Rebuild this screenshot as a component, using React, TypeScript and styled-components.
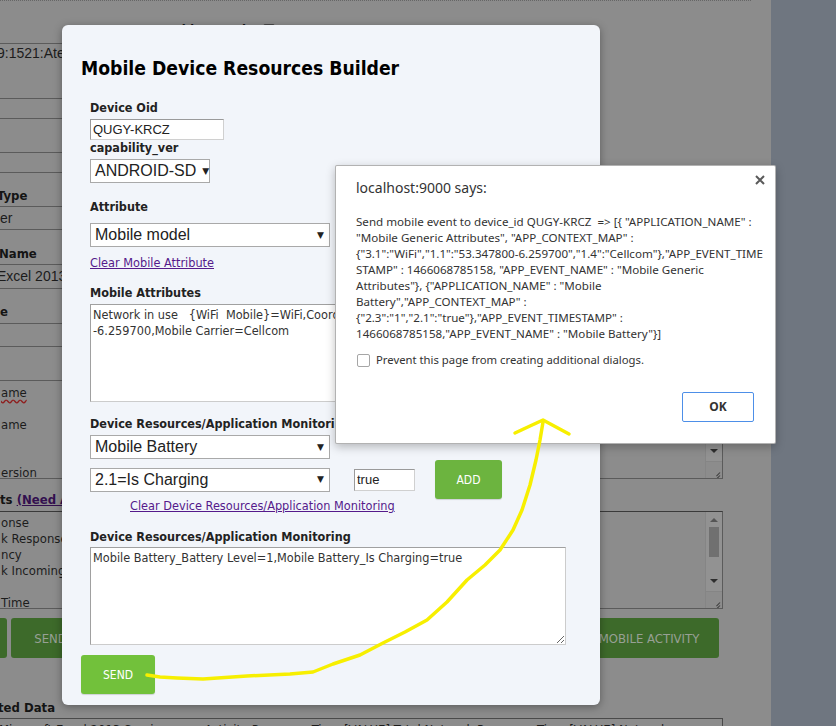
import React from "react";
import styled, { createGlobalStyle } from "styled-components";

const tahoma = `"DejaVu Sans Condensed", "Liberation Sans", sans-serif`;
const arial = `"Liberation Sans", Arial, sans-serif`;
const segoe = `"Noto Sans", "Open Sans", sans-serif`;

const Global = createGlobalStyle`
  html, body { margin: 0; padding: 0; overflow: hidden; }
  body { width: 836px; height: 726px; background: #6f7680; }
`;

const Screen = styled.div`
  position: relative;
  width: 836px;
  height: 726px;
  overflow: hidden;
`;

/* ---------- dimmed page behind the modal ---------- */
const Backdrop = styled.div`
  display: flex;
  width: 836px;
  height: 726px;
  background: #6f7680;
`;

const BgPage = styled.div`
  flex: none;
  width: 771px;
  height: 726px;
  background: #8c8c8c;
  overflow: hidden;
  display: flex;
  flex-direction: column;
  color: #1c1c1c;
  font-family: ${tahoma};
`;

const TopRule = styled.div`
  flex: none;
  width: 751px;
  border-top: 1px dotted #666;
`;

const GridRow = styled.div<{ $h: number; $align?: string; $pb?: number; $pt?: number; $noline?: boolean }>`
  flex: none;
  box-sizing: border-box;
  width: 590px;
  height: ${(p) => p.$h}px;
  display: flex;
  align-items: ${(p) => p.$align ?? "center"};
  padding-bottom: ${(p) => p.$pb ?? 0}px;
  padding-top: ${(p) => p.$pt ?? 0}px;
  border-bottom: ${(p) => (p.$noline ? "none" : "1px solid #5b5b5b")};
`;

const BgBold = styled.span<{ $shift?: number }>`
  font: bold 13px/15px ${tahoma};
  color: #141414;
  margin-left: ${(p) => p.$shift ?? 0}px;
  white-space: nowrap;
`;

const HeaderLabel = styled.span`
  display: inline-block;
  width: 81px;
  margin-left: 172px;
  overflow: hidden;
  font: bold 13px/15px ${tahoma};
  color: #141414;
  white-space: nowrap;
`;

const BgValue = styled.span<{ $shift?: number }>`
  font: 14px/17px ${arial};
  color: #1c1c1c;
  margin-left: ${(p) => p.$shift ?? 0}px;
  white-space: nowrap;
`;

const BgLink = styled.span`
  color: #33104f;
  text-decoration: underline;
`;

const HeaderCheck = styled.span`
  display: inline-block;
  width: 10px;
  height: 10px;
  border: 1px solid #4a4a4a;
  border-radius: 2px;
  margin-left: 10px;
  margin-top: 2px;
`;

const BgArea = styled.div<{ $h: number; $darkTop?: boolean }>`
  flex: none;
  box-sizing: border-box;
  margin-left: -20px;
  width: 743px;
  height: ${(p) => p.$h}px;
  border: 1px solid #5b5b5b;
  border-top-color: ${(p) => (p.$darkTop ? "#3a3a3a" : "#5b5b5b")};
  display: flex;
  overflow: hidden;
`;

const BgAreaText = styled.div<{ $pt: number }>`
  flex: 1;
  padding: ${(p) => p.$pt}px 0 0 20px;
  font: 13px/16px ${tahoma};
  color: #1c1c1c;
  white-space: pre;
`;

const Squiggle = styled.span`
  text-decoration: underline wavy #8e1d1d;
  text-decoration-skip-ink: none;
  text-underline-offset: 2px;
`;

const ScrollCol = styled.div`
  flex: none;
  width: 16px;
  border-left: 1px solid #858585;
  background: #929292;
  display: flex;
  flex-direction: column;
  align-items: center;
`;

const ScrollArrow = styled.div<{ $up?: boolean }>`
  flex: none;
  width: 0;
  height: 0;
  margin: ${(p) => (p.$up ? "6px 0 5px" : "5px 0 8px")};
  border-left: 4px solid transparent;
  border-right: 4px solid transparent;
  ${(p) => (p.$up ? "border-bottom: 4px solid #555;" : "border-top: 4px solid #2e2e2e;")}
`;

const ScrollThumb = styled.div`
  flex: none;
  width: 10px;
  height: 30px;
  background: #707070;
`;

const ScrollTrack = styled.div`
  flex: 1;
`;

const Resizer = styled.div`
  flex: none;
  box-sizing: border-box;
  width: 17px;
  height: 17px;
  margin-left: -1px;
  border-top: 1px solid #858585;
  border-left: 1px solid #858585;
  background: #8c8c8c;
  position: relative;
  &::before,
  &::after {
    content: "";
    position: absolute;
    border-top: 1px solid #3a3a3a;
    transform: rotate(-45deg);
    transform-origin: right center;
  }
  &::before {
    right: 2px;
    bottom: 2px;
    width: 9px;
  }
  &::after {
    right: 2px;
    bottom: 5px;
    width: 5px;
  }
`;

const BgButtons = styled.div`
  flex: none;
  margin-top: 9px;
  width: 719px;
  height: 40px;
  display: flex;
`;

const BgButton = styled.div<{ $w: number; $ml?: number; $auto?: boolean }>`
  flex: none;
  box-sizing: border-box;
  width: ${(p) => p.$w}px;
  margin-left: ${(p) => (p.$auto ? "auto" : `${p.$ml ?? 0}px`)};
  height: 40px;
  background: #3d6a2a;
  border-radius: 3px;
  display: flex;
  align-items: center;
  justify-content: center;
  font: 13px/1 ${tahoma};
  color: #98a095;
`;

const BottomBox = styled.div`
  flex: none;
  box-sizing: border-box;
  margin-left: -20px;
  width: 743px;
  height: 30px;
  border: 1px solid #4a4a4a;
  padding: 3px 0 0 18px;
  font: 13px/16px ${tahoma};
  color: #1c1c1c;
  white-space: pre;
  overflow: hidden;
`;

/* ---------- modal ---------- */
const Modal = styled.section`
  position: absolute;
  left: 62px;
  top: 25px;
  width: 538px;
  height: 680px;
  box-sizing: border-box;
  padding: 32px 0 0 19px;
  background: #f2f5fa;
  border-radius: 6px;
  box-shadow: 0 2px 8px rgba(0, 0, 0, 0.35);
  display: flex;
  flex-direction: column;
  align-items: flex-start;
  font-family: ${tahoma};
  color: #333;
`;

const Title = styled.h2`
  margin: 0;
  font: bold 19.2px/24px ${tahoma};
  color: #000;
  white-space: nowrap;
`;

const Form = styled.div`
  display: flex;
  flex-direction: column;
  align-items: flex-start;
  padding-left: 9px;
`;

const FieldLabel = styled.div<{ $mt: number }>`
  margin-top: ${(p) => p.$mt}px;
  font: bold 12.5px/14px ${tahoma};
  color: #222;
  white-space: nowrap;
`;

const TextInput = styled.input<{ $w: number; $h: number; $mt?: number; $ml?: number }>`
  box-sizing: border-box;
  width: ${(p) => p.$w}px;
  height: ${(p) => p.$h}px;
  margin: ${(p) => p.$mt ?? 0}px 0 0 ${(p) => p.$ml ?? 0}px;
  padding: 0 2px;
  border: 1px solid;
  border-color: #9a9a9a #d0d0d0 #d0d0d0 #9a9a9a;
  background: #fff;
  font: 13px ${arial};
  color: #222;
  outline: none;
`;

const SelectBox = styled.div<{ $w: number; $mt: number }>`
  box-sizing: border-box;
  width: ${(p) => p.$w}px;
  height: 24px;
  margin-top: ${(p) => p.$mt}px;
  padding: 0 5px 0 4px;
  border: 1px solid #a9a9a9;
  background: #fff;
  display: flex;
  align-items: center;
  justify-content: space-between;
  font: 16px/20px ${arial};
  color: #222;
  white-space: nowrap;
`;

const Caret = styled.span`
  font: 9px/1 "DejaVu Sans", sans-serif;
  color: #222;
  margin-left: 6px;
`;

const FormLink = styled.a<{ $mt: number; $indent?: number }>`
  margin-top: ${(p) => p.$mt}px;
  margin-left: ${(p) => p.$indent ?? 0}px;
  font: 12.6px/14px ${tahoma};
  color: #551a8b;
  text-decoration: underline;
  white-space: nowrap;
`;

const Area = styled.textarea<{ $mt: number }>`
  box-sizing: border-box;
  width: 476px;
  height: 98px;
  margin: ${(p) => p.$mt}px 0 0 0;
  padding: 2px 2px;
  border: 1px solid;
  border-color: #a0a0a0 #cccccc #cccccc #a0a0a0;
  background: #fff;
  font: 12.6px/16px ${tahoma};
  color: #333;
  white-space: pre;
  overflow: hidden;
  outline: none;
`;

const ActionRow = styled.div`
  margin-top: 1px;
  height: 39px;
  display: flex;
  align-items: center;
`;

const GreenButton = styled.button<{ $w: number; $ml?: number; $mt?: number; $bg: string }>`
  box-sizing: border-box;
  width: ${(p) => p.$w}px;
  height: 39px;
  margin: ${(p) => p.$mt ?? 0}px 0 0 ${(p) => p.$ml ?? 0}px;
  border: none;
  border-radius: 3px;
  background: ${(p) => p.$bg};
  box-shadow: 0 1px 1px rgba(0, 0, 0, 0.15);
  color: #fff;
  font: 12px/1 ${tahoma};
  padding: 0;
`;

/* ---------- alert dialog ---------- */
const Alert = styled.div`
  position: absolute;
  left: 335px;
  top: 165px;
  width: 441px;
  height: 279px;
  box-sizing: border-box;
  padding: 12px 21px 21px 20px;
  background: #fff;
  border: 1px solid rgba(0, 0, 0, 0.3);
  border-radius: 2px;
  box-shadow: 0 3px 10px rgba(0, 0, 0, 0.25);
  display: flex;
  flex-direction: column;
  font-family: ${segoe};
  color: #333;
`;

const CloseX = styled.svg`
  position: absolute;
  top: 9px;
  right: 10px;
`;

const AlertTitle = styled.div`
  font: 14px/20px ${segoe};
  color: #333;
`;

const AlertMessage = styled.div`
  margin-top: 16px;
  font: 11.6px/16px ${segoe};
  color: #333;
`;

const MsgLine = styled.div`
  white-space: pre;
`;

const PreventRow = styled.label`
  margin-top: 10px;
  display: flex;
  align-items: center;
  font: 11.3px/16px ${segoe};
  color: #333;
`;

const Box = styled.span`
  box-sizing: border-box;
  width: 13px;
  height: 13px;
  margin: 0 6px 0 1px;
  border: 1px solid #a6a6a6;
  border-radius: 2px;
  background: #fff;
`;

const Footer = styled.div`
  margin-top: auto;
  display: flex;
  justify-content: flex-end;
`;

const OkButton = styled.button`
  box-sizing: border-box;
  width: 72px;
  height: 30px;
  border: 1px solid #4d8fe8;
  border-radius: 2px;
  background: #fff;
  font: bold 12px/1 ${segoe};
  color: #333;
`;

const Scribble = styled.svg`
  position: absolute;
  left: 0;
  top: 0;
  pointer-events: none;
`;

const messageLines = [
  'Send mobile event to device_id QUGY-KRCZ  => [{ "APPLICATION_NAME" :',
  '"Mobile Generic Attributes", "APP_CONTEXT_MAP" :',
  '{"3.1":"WiFi","1.1":"53.347800-6.259700","1.4":"Cellcom"},"APP_EVENT_TIME',
  'STAMP" : 1466068785158, "APP_EVENT_NAME" : "Mobile Generic',
  'Attributes"}, {"APPLICATION_NAME" : "Mobile',
  'Battery","APP_CONTEXT_MAP" :',
  '{"2.3":"1","2.1":"true"},"APP_EVENT_TIMESTAMP" :',
  '1466068785158,"APP_EVENT_NAME" : "Mobile Battery"}]',
];

const arrowPath =
  "M147,675 L160,677 L177,678 L203,679 L247,676 L290,674 L313,672 L333,664 L360,655 L383,643 L405,632 L427,620 L447,602 L467,580 L485,565 L500,550 L513,530 L522,510 L530,485 L536,460 L540,440 L543,422";

export default function App() {
  return (
    <>
      <Global />
      <Screen>
        <Backdrop>
          <BgPage>
            <TopRule />
            <GridRow $h={43} $align="flex-start" $pt={21}>
              <HeaderLabel>Hide Location</HeaderLabel>
              <HeaderCheck />
            </GridRow>
            <GridRow $h={55} $align="flex-start" $pt={1}>
              <BgValue $shift={-3}>9:1521:Aternity</BgValue>
            </GridRow>
            <GridRow $h={20} />
            <GridRow $h={34} />
            <GridRow $h={20} />
            <GridRow $h={34} $align="flex-end" $pb={3}>
              <BgBold $shift={-3}>Type</BgBold>
            </GridRow>
            <GridRow $h={23}>
              <BgValue $shift={0}>er</BgValue>
            </GridRow>
            <GridRow $h={35} $align="flex-end" $pb={3}>
              <BgBold $shift={-1}>Name</BgBold>
            </GridRow>
            <GridRow $h={24}>
              <BgValue $shift={-3}>Excel 2013</BgValue>
            </GridRow>
            <GridRow $h={35} $align="flex-end" $pb={4}>
              <BgBold $shift={0}>e</BgBold>
            </GridRow>
            <GridRow $h={23} />
            <GridRow $h={33} $noline />
            <BgArea $h={99}>
              <BgAreaText $pt={4}>
                <Squiggle>ame</Squiggle>
                {"\n\name\n\n\nersion"}
              </BgAreaText>
              <ScrollCol>
                <ScrollArrow $up />
                <ScrollTrack />
                <ScrollArrow />
                <Resizer />
              </ScrollCol>
            </BgArea>
            <GridRow $h={32} $align="flex-end" $pb={4} $noline>
              <BgBold $shift={0}>
                ts <BgLink>(Need Admin Rights)</BgLink>
              </BgBold>
            </GridRow>
            <BgArea $h={98} $darkTop>
              <BgAreaText $pt={3}>{"onse\nk Response\nncy\nk Incoming\n\nTime"}</BgAreaText>
              <ScrollCol>
                <ScrollArrow $up />
                <ScrollThumb />
                <ScrollTrack />
                <ScrollArrow />
                <Resizer />
              </ScrollCol>
            </BgArea>
            <BgButtons>
              <BgButton $w={67} $ml={-60}>ADD</BgButton>
              <BgButton $w={79} $ml={4}>SEND</BgButton>
              <BgButton $w={140} $auto>MOBILE ACTIVITY</BgButton>
            </BgButtons>
            <GridRow $h={60} $align="flex-end" $pb={3} $noline>
              <BgBold $shift={-2}>ted Data</BgBold>
            </GridRow>
            <BottomBox>
              {"Microsoft Excel 2013 Service          Activity Response Time [VALUE] Total Network Response Time [VALUE] Network"}
            </BottomBox>
          </BgPage>
        </Backdrop>

        <Modal>
          <Title>Mobile Device Resources Builder</Title>
          <Form>
            <FieldLabel $mt={20}>Device Oid</FieldLabel>
            <TextInput $w={134} $h={21} $mt={4} readOnly defaultValue="QUGY-KRCZ" />
            <FieldLabel $mt={1}>capability_ver</FieldLabel>
            <SelectBox $w={120} $mt={4}>
              ANDROID-SD<Caret>▼</Caret>
            </SelectBox>
            <FieldLabel $mt={17}>Attribute</FieldLabel>
            <SelectBox $w={240} $mt={9}>
              Mobile model<Caret>▼</Caret>
            </SelectBox>
            <FormLink $mt={9} href="#">Clear Mobile Attribute</FormLink>
            <FieldLabel $mt={16}>Mobile Attributes</FieldLabel>
            <Area
              $mt={4}
              readOnly
              spellCheck={false}
              defaultValue={"Network in use   {WiFi  Mobile}=WiFi,Coordinates=53.347800\n-6.259700,Mobile Carrier=Cellcom"}
            />
            <FieldLabel $mt={15}>Device Resources/Application Monitoring</FieldLabel>
            <SelectBox $w={240} $mt={4}>
              Mobile Battery<Caret>▼</Caret>
            </SelectBox>
            <ActionRow>
              <SelectBox $w={240} $mt={0}>
                2.1=Is Charging<Caret>▼</Caret>
              </SelectBox>
              <TextInput $w={61} $h={22} $ml={24} readOnly defaultValue="true" />
              <GreenButton $w={67} $ml={20} $bg="#6cb43f">ADD</GreenButton>
            </ActionRow>
            <FormLink $mt={0} $indent={40} href="#">
              Clear Device Resources/Application Monitoring
            </FormLink>
            <FieldLabel $mt={17}>Device Resources/Application Monitoring</FieldLabel>
            <Area
              $mt={3}
              readOnly
              spellCheck={false}
              defaultValue={"Mobile Battery_Battery Level=1,Mobile Battery_Is Charging=true"}
            />
          </Form>
          <GreenButton $w={74} $mt={10} $bg="#72c13b">SEND</GreenButton>
        </Modal>

        <Alert>
          <CloseX width="10" height="10" viewBox="0 0 10 10">
            <path d="M1,1 L9,9 M9,1 L1,9" stroke="#5a5a5a" strokeWidth="2" />
          </CloseX>
          <AlertTitle>localhost:9000 says:</AlertTitle>
          <AlertMessage>
            {messageLines.map((l, i) => (
              <MsgLine key={i}>{l}</MsgLine>
            ))}
          </AlertMessage>
          <PreventRow>
            <Box />
            Prevent this page from creating additional dialogs.
          </PreventRow>
          <Footer>
            <OkButton>OK</OkButton>
          </Footer>
        </Alert>

        <Scribble width="836" height="726" viewBox="0 0 836 726">
          <path d={arrowPath} fill="none" stroke="#f7ef00" strokeWidth="3.5" strokeLinecap="round" strokeLinejoin="round" />
          <path d="M515,433 L530,426 L543,420 L556,427 L569,434" fill="none" stroke="#f7ef00" strokeWidth="3.5" strokeLinecap="round" strokeLinejoin="round" />
        </Scribble>
      </Screen>
    </>
  );
}
